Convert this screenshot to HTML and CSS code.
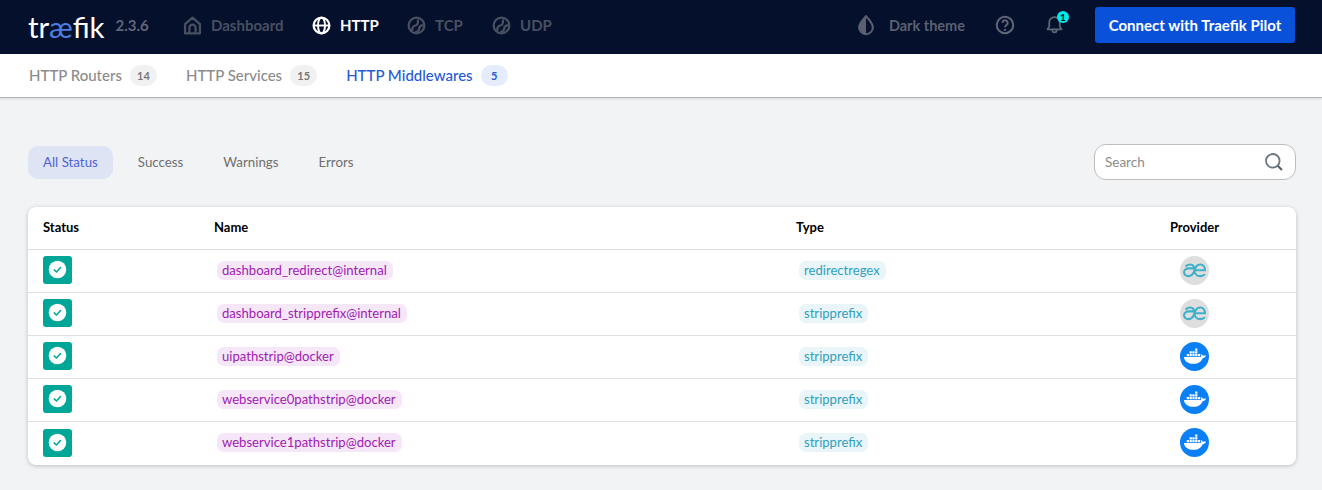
FILE: index.html
```html
<!DOCTYPE html>
<html lang="en">
<head>
<meta charset="utf-8">
<title>Traefik</title>
<link rel="stylesheet" href="styles.css">
</head>
<body>
<svg class="defs" width="0" height="0">
  <symbol id="ae" viewBox="0 0 30 30">
    <path d="M15 15.200C13.800 18.800 11.600 20.800 8.800 20.800 6.200 20.800 4.200 19 4.200 16.800 4.200 14.500 6.200 12.800 9 12.800H15M6.400 10.200C7.600 9.300 9 8.800 10.600 8.800 13.600 8.800 15 11.400 15 15.200 15.800 11.500 18 8.800 21 8.800 23.900 8.800 25.800 11.200 25.800 14.700H15M15 15.200C15.200 18.400 17.600 20.800 20.800 20.800 22.500 20.800 24 20.300 25.200 19.400" fill="none" stroke="#3db1cb" stroke-width="2.200" stroke-linecap="round"/>
  </symbol>
  <symbol id="docker" viewBox="0 0 30 30">
    <path fill="#fff" d="M4 15.400h17.600c.6-1.300.2-3 .1-3.300.9.500 1.600 1.300 2 2.200 1-.5 2.200-.5 3.300 0-.8 1.500-2 2.300-3.600 2.500-1.300 3.700-4.500 5.700-9.300 5.700-5.800 0-9.300-2.500-10.100-7.100z"/>
    <path fill="#fff" d="M7 12.400h2.300v2.300H7zM9.900 12.400h2.300v2.300H9.900zM12.800 12.400h2.300v2.300h-2.300zM15.700 12.400H18v2.300h-2.300zM18.600 12.400h2.300v2.300h-2.300zM9.900 9.600h2.300v2.300H9.900zM12.800 9.600h2.300v2.300h-2.300zM15.700 9.600H18v2.300h-2.300zM15.700 6.800H18v2.300h-2.300z"/>
  </symbol>
  <symbol id="ok" viewBox="0 0 29 28">
    <circle cx="14.500" cy="13.500" r="8.800" fill="#fff"/>
    <path d="M11.200 13.900l2.300 2.100 4-4.400" fill="none" stroke="#00a697" stroke-width="1.500" stroke-linecap="round" stroke-linejoin="round"/>
  </symbol>
  <symbol id="proto" viewBox="0 0 24 24">
    <circle cx="12" cy="12" r="9" fill="none" stroke="currentColor" stroke-width="2.600"/>
    <path d="M7.500 18c-1-3.800.8-5.400 3.200-6 2.600-.6 3.600-2.400 2.800-6.800M10.500 19.500c2.500-.3 4.300-1.700 4.500-3.800.2-2.400 1.700-3.700 4.500-4" fill="none" stroke="currentColor" stroke-width="2.600"/>
  </symbol>
</svg>

<header class="topbar">
  <div class="brand"><span class="logo">tr<span class="logo-ae">æ</span>fik</span><span class="version">2.3.6</span></div>
  <nav class="main-nav">
    <a class="nav-item nav-dashboard">
      <svg class="nav-icon" viewBox="0 0 24 24"><path d="M3.500 21V10.500L12 3l8.500 7.500V21H3.500zM8.500 21v-6.500a3.500 3.500 0 0 1 7 0V21" fill="none" stroke="currentColor" stroke-width="2.600" stroke-linejoin="round"/></svg>
      Dashboard
    </a>
    <a class="nav-item nav-http is-active">
      <svg class="nav-icon" viewBox="0 0 24 24"><circle cx="12" cy="12" r="9" fill="none" stroke="currentColor" stroke-width="2.600"/><ellipse cx="12" cy="12" rx="4" ry="9" fill="none" stroke="currentColor" stroke-width="2.200"/><path d="M3 12h18" stroke="currentColor" stroke-width="2.200"/></svg>
      HTTP
    </a>
    <a class="nav-item nav-tcp"><svg class="nav-icon"><use href="#proto"/></svg>TCP</a>
    <a class="nav-item"><svg class="nav-icon"><use href="#proto"/></svg>UDP</a>
  </nav>
  <div class="top-actions">
    <a class="nav-item theme-toggle">
      <svg class="theme-icon" viewBox="0 0 24 24"><path d="M12 2.500c4.500 4.700 7.500 8.300 7.500 12a7.500 7.500 0 0 1-15 0c0-3.700 3-7.300 7.500-12z" fill="none" stroke="currentColor" stroke-width="2.200"/><path d="M12 2.500c-4.500 4.700-7.500 8.300-7.500 12A7.500 7.500 0 0 0 12 22z" fill="currentColor"/></svg>
      Dark theme
    </a>
    <svg class="help-icon" viewBox="0 0 24 24"><circle cx="12" cy="12" r="9" fill="none" stroke="currentColor" stroke-width="2.200"/><path d="M9.300 9.700a2.800 2.800 0 1 1 4.300 2.300c-1 .7-1.600 1.200-1.600 2.500" fill="none" stroke="currentColor" stroke-width="2.200"/><circle cx="12" cy="17.300" r="1.300" fill="currentColor"/></svg>
    <div class="bell">
      <svg class="bell-icon" viewBox="0 0 24 24"><path d="M12 3.500a6 6 0 0 0-6 6V14l-2 3.500h16L18 14V9.500a6 6 0 0 0-6-6zM9.500 18.500a2.500 2.500 0 0 0 5 0" fill="none" stroke="currentColor" stroke-width="2" stroke-linejoin="round"/></svg>
      <span class="bell-badge">1</span>
    </div>
    <button class="pilot-btn">Connect with Traefik Pilot</button>
  </div>
</header>

<nav class="subnav">
  <a class="sub-item">HTTP Routers <span class="count">14</span></a>
  <a class="sub-item">HTTP Services <span class="count">15</span></a>
  <a class="sub-item is-active">HTTP Middlewares <span class="count">5</span></a>
</nav>

<main class="content">
  <div class="toolbar">
    <div class="filters">
      <a class="filter is-active">All Status</a>
      <a class="filter">Success</a>
      <a class="filter">Warnings</a>
      <a class="filter">Errors</a>
    </div>
    <label class="search">
      <span class="search-text">Search</span>
      <svg class="search-icon" viewBox="0 0 20 20"><circle cx="8.800" cy="8.800" r="6.800" fill="none" stroke="#6d7780" stroke-width="1.800"/><path d="M13.700 13.700l4.300 4.300" stroke="#55606a" stroke-width="2"/></svg>
    </label>
  </div>

  <section class="card">
    <div class="row head">
      <div>Status</div><div>Name</div><div>Type</div><div class="cell-provider">Provider</div>
    </div>
    <div class="row">
      <div><svg class="status"><use href="#ok"/></svg></div>
      <div><span class="tag tag-name">dashboard_redirect@internal</span></div>
      <div><span class="tag tag-type">redirectregex</span></div>
      <div class="cell-provider"><svg class="prov prov-internal"><use href="#ae"/></svg></div>
    </div>
    <div class="row">
      <div><svg class="status"><use href="#ok"/></svg></div>
      <div><span class="tag tag-name">dashboard_stripprefix@internal</span></div>
      <div><span class="tag tag-type">stripprefix</span></div>
      <div class="cell-provider"><svg class="prov prov-internal"><use href="#ae"/></svg></div>
    </div>
    <div class="row">
      <div><svg class="status"><use href="#ok"/></svg></div>
      <div><span class="tag tag-name">uipathstrip@docker</span></div>
      <div><span class="tag tag-type">stripprefix</span></div>
      <div class="cell-provider"><svg class="prov prov-docker"><use href="#docker"/></svg></div>
    </div>
    <div class="row">
      <div><svg class="status"><use href="#ok"/></svg></div>
      <div><span class="tag tag-name">webservice0pathstrip@docker</span></div>
      <div><span class="tag tag-type">stripprefix</span></div>
      <div class="cell-provider"><svg class="prov prov-docker"><use href="#docker"/></svg></div>
    </div>
    <div class="row">
      <div><svg class="status"><use href="#ok"/></svg></div>
      <div><span class="tag tag-name">webservice1pathstrip@docker</span></div>
      <div><span class="tag tag-type">stripprefix</span></div>
      <div class="cell-provider"><svg class="prov prov-docker"><use href="#docker"/></svg></div>
    </div>
  </section>
</main>
</body>
</html>
```
FILE: styles.css
```css
* { box-sizing: border-box; }
html, body { margin: 0; height: 100%; }
body {
  background: #f2f3f5;
  font-family: "Lato", "Noto Sans", sans-serif;
  overflow: hidden;
}
.defs { position: absolute; }

.topbar {
  height: 54px;
  background: #05102c;
  display: flex;
  align-items: center;
  padding: 0 27px 4px 28px;
}
.brand { display: flex; align-items: center; width: 154px; }
.logo { font-family: "Lato", sans-serif; font-size: 29.500px; font-weight: 400; color: #fff; line-height: 1; padding-top: 3px; }
.logo-ae { color: #4a7fe0; }
.version { margin-left: 11px; font-size: 15px; font-weight: 700; color: #5f6676; }
.main-nav { display: flex; align-items: center; }
.nav-item { display: flex; align-items: center; gap: 8px; font-size: 15px; font-weight: 700; color: #484f60; }
.nav-item.is-active { color: #fff; }
.nav-icon { width: 21px; height: 21px; color: #484f60; }
.is-active .nav-icon { color: #fff; }
.nav-dashboard { width: 129px; }
.nav-http { width: 95px; }
.nav-tcp { width: 85px; }
.top-actions { margin-left: auto; display: flex; align-items: center; }
.theme-icon { width: 22px; height: 22px; }
.theme-toggle { gap: 12px; margin-right: 29px; color: #5a6070; font-size: 14.500px; }
.help-icon { width: 22px; height: 22px; color: #5f6676; margin-right: 28px; }
.bell { position: relative; width: 22px; height: 22px; margin-right: 29px; }
.bell-icon { width: 21px; height: 21px; color: #5f6676; }
.bell-badge {
  position: absolute; top: -3px; right: -3px;
  width: 12px; height: 12px; border-radius: 50%;
  background: #03e8e8; color: #05102c;
  font-size: 10px; font-weight: 700; line-height: 12px; text-align: center;
}
.pilot-btn {
  width: 200px; height: 36px; border: 0; border-radius: 3px;
  background: #0a51d9; color: #fff;
  font: 700 15px "Lato", sans-serif;
  padding: 0;
}

.subnav {
  height: 44px;
  background: #fff;
  border-bottom: 1px solid #b5b5b5;
  box-shadow: 0 1px 2px rgba(0,0,0,.12);
  display: flex;
  align-items: center;
  gap: 29px;
  padding: 0 29px 1px;
}
.sub-item { display: flex; align-items: center; gap: 8px; font-size: 15px; font-weight: 500; color: #8b8b8b; }
.sub-item.is-active { color: #2659d6; }
.count {
  min-width: 27px; height: 21px; padding: 0 7px; border-radius: 11px;
  background: #f1f1f1; color: #777;
  font-size: 11px; font-weight: 700; line-height: 21px; text-align: center;
}
.is-active .count { background: #e5ecfb; color: #2659d6; }

.content { padding: 46px 26px 0 28px; }
.toolbar { display: flex; justify-content: space-between; align-items: center; }
.filters { display: flex; gap: 10px; }
.filter { height: 33px; padding: 0 15px; border-radius: 10px; font-size: 13.300px; line-height: 33px; color: #6f6f6f; }
.filter.is-active { background: #dee4f4; color: #4f63d2; }
.search {
  width: 202px; height: 36px; display: flex; align-items: center; justify-content: space-between;
  background: #fff; border: 1px solid #bdbdbd; border-radius: 12px; padding: 0 11px 0 10px;
}
.search-text { font-size: 13.500px; color: #8c8c8c; }
.search-icon { width: 20px; height: 20px; }

.card {
  margin-top: 27px;
  background: #fff;
  border-radius: 8px;
  box-shadow: 0 1px 4px rgba(0,0,0,.22);
  overflow: hidden;
}
.row {
  display: grid;
  grid-template-columns: 171px 582px 1fr 203px;
  align-items: center;
  height: 43px;
  padding-bottom: 2px;
  border-bottom: 1px solid #e0e0e0;
  font-size: 13px;
}
.row:last-child { border-bottom: 0; }
.row > div { padding-left: 15px; display: flex; align-items: center; }
.head { color: #000; font-size: 13px; font-weight: 700; }
.row > .cell-provider { padding-left: 0; justify-content: center; }
.status { width: 29px; height: 28px; background: #00a697; border-radius: 3px; display: block; }
.tag { display: inline-block; margin-left: 3px; height: 19px; line-height: 19px; padding: 0 6px 0 5px; border-radius: 7px; font-size: 13.100px; }
.tag-name { background: #f5e7f8; color: #a01ab0; }
.tag-type { background: #e9f5f8; color: #2fa0bd; }
.prov { width: 29px; height: 29px; border-radius: 50%; display: block; }
.prov-internal { background: #dedede; }
.prov-docker { background: #0b7ff5; }
```
